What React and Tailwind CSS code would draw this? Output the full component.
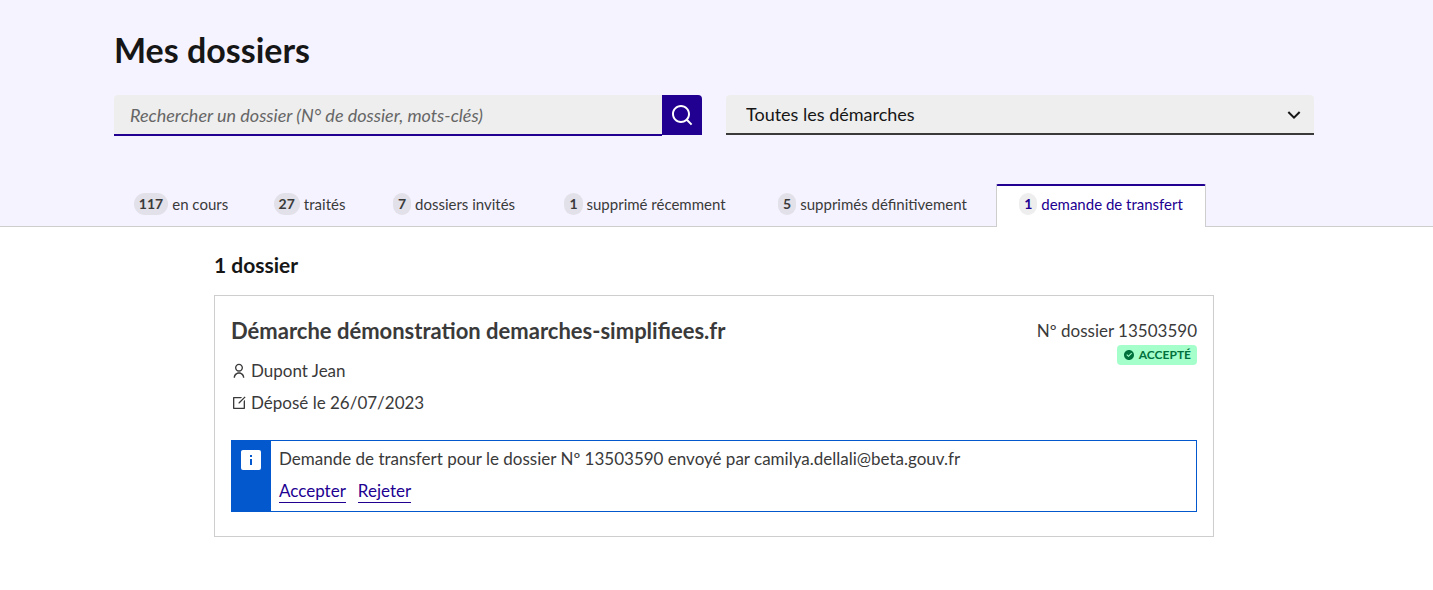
import { RiArrowDownSLine, RiCheckboxCircleFill, RiEditBoxLine, RiSearchLine, RiUserLine } from "react-icons/ri";

const tabs = [
  { count: 117, label: "en cours", width: "w-[134px]" },
  { count: 27, label: "traités", width: "w-[115px]" },
  { count: 7, label: "dossiers invités", width: "w-[166px]" },
  { count: 1, label: "supprimé récemment", width: "w-[208px]" },
  { count: 5, label: "supprimés définitivement", width: "w-[239px]" },
  { count: 1, label: "demande de transfert", width: "w-[210px]", active: true },
];

function Tab({ count, label, width, active }) {
  return (
    <li className="shrink-0">
      <a
        href="#"
        aria-current={active ? "page" : undefined}
        className={
          "flex items-center justify-center gap-1 whitespace-nowrap text-[15px] leading-6 " +
          width +
          (active
            ? " -mb-px h-[43px] rounded-t-[2px] border-x border-t-2 border-x-[#cecece] border-t-[#210091] bg-white pb-[5px] text-[#210091]"
            : " h-[42px] pb-[2px] text-[#3a3a3a]")
        }
      >
        <span
          className={
            "rounded-full px-[5px] text-[14px] font-bold leading-[22px] " +
            (active ? "bg-[#eeeeee]" : "bg-[#e2e0e8]")
          }
        >
          {count}
        </span>
        {label}
      </a>
    </li>
  );
}

function Header() {
  return (
    <header className="border-b border-[#cecece] bg-[#f5f3ff] pr-[5px]">
      <div className="mx-auto max-w-[1200px]">
        <h1 className="pt-[30px] text-[34px] font-bold leading-10 text-[#161616]">Mes dossiers</h1>
        <div className="mt-[25px] grid grid-cols-2 items-start gap-6">
          <form role="search" className="flex items-start">
            <input
              type="search"
              aria-label="Rechercher un dossier"
              placeholder="Rechercher un dossier (N° de dossier, mots-clés)"
              className="h-[41px] min-w-0 flex-1 rounded-tl-[4px] border-b-2 border-[#210091] bg-[#eeeeee] px-4 text-[18px] leading-6 placeholder:italic placeholder:text-[#666666]"
            />
            <button
              type="button"
              aria-label="Rechercher"
              className="flex size-10 items-center justify-center rounded-tr-[4px] bg-[#210091] text-white"
            >
              <RiSearchLine size={24} />
            </button>
          </form>
          <div className="relative">
            <select
              aria-label="Démarche"
              className="h-10 w-full appearance-none rounded-t-[4px] border-b-2 border-[#3a3a3a] bg-[#eeeeee] px-5 text-[18px] leading-6 text-[#161616]"
            >
              <option>Toutes les démarches</option>
            </select>
            <RiArrowDownSLine size={24} className="pointer-events-none absolute right-2 top-2 text-[#161616]" />
          </div>
        </div>
        <nav aria-label="Dossiers" className="mt-12">
          <ul className="flex items-start gap-1">
            {tabs.map((tab) => (
              <Tab key={tab.label} {...tab} />
            ))}
          </ul>
        </nav>
      </div>
    </header>
  );
}

function TransferNotice() {
  return (
    <div className="mt-[25px] flex border border-[#0458ce]">
      <div className="w-[39px] shrink-0 bg-[#0458ce] pl-[7px] pt-[7px]">
        <svg width="24" height="24" viewBox="0 0 24 24" fill="#fff" aria-hidden="true">
          <path
            fillRule="evenodd"
            d="M4 2h16a2 2 0 0 1 2 2v16a2 2 0 0 1-2 2H4a2 2 0 0 1-2-2V4c0-1.100.9-2 2-2Zm7 5v2h2V7h-2Zm0 4v6h2v-6h-2Z"
          />
        </svg>
      </div>
      <div className="px-2 pb-2 pt-[6px] text-[17px] leading-6 text-[#3a3a3a]">
        <p>Demande de transfert pour le dossier Nº 13503590 envoyé par camilya.dellali@beta.gouv.fr</p>
        <div className="mt-2 flex gap-3 text-[#210091]">
          <a href="#" className="border-b border-[#210091] leading-[23px]">Accepter</a>
          <a href="#" className="border-b border-[#210091] leading-[23px]">Rejeter</a>
        </div>
      </div>
    </div>
  );
}

export default function App() {
  return (
    <div className="bg-white font-['Lato','Open_Sans',sans-serif]">
      <Header />
      <main className="pr-[5px]">
        <div className="mx-auto max-w-[1000px]">
          <h2 className="pt-6 text-[21px] font-bold leading-7 text-[#161616]">1 dossier</h2>
          <article className="mt-4 border border-[#cecece] px-4 pb-6 pt-[23px] text-[17px] leading-6 text-[#3a3a3a]">
            <div className="flex items-start justify-between">
              <div>
                <h3 className="text-[22px] font-bold leading-6">Démarche démonstration demarches-simplifiees.fr</h3>
                <p className="mt-4 flex items-center gap-1">
                  <RiUserLine size={16} />
                  Dupont Jean
                </p>
                <p className="mt-2 flex items-center gap-1">
                  <RiEditBoxLine size={16} />
                  Déposé le 26/07/2023
                </p>
              </div>
              <div className="flex flex-col items-end">
                <p>Nº dossier 13503590</p>
                <p className="mt-[2px] flex h-5 items-center gap-1 rounded-[4px] bg-[#a5ffcb] px-1.5 text-[12px] font-bold text-[#00713d]">
                  <RiCheckboxCircleFill size={12} />
                  ACCEPTÉ
                </p>
              </div>
            </div>
            <TransferNotice />
          </article>
        </div>
      </main>
    </div>
  );
}
